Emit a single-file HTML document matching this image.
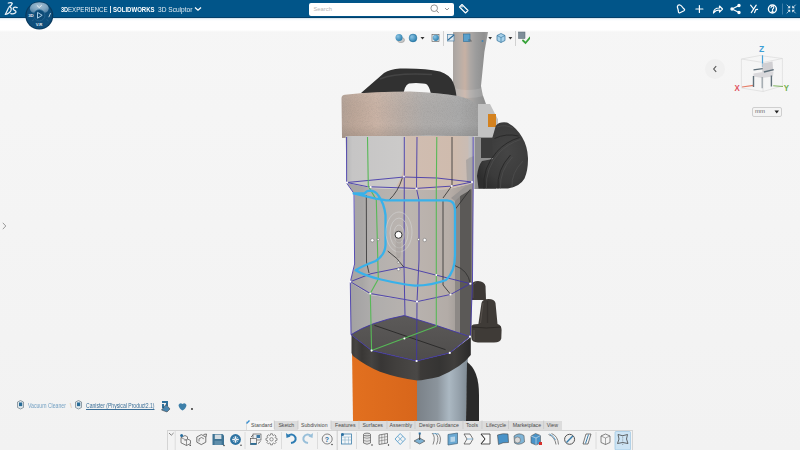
<!DOCTYPE html>
<html><head><meta charset="utf-8">
<style>
*{margin:0;padding:0;box-sizing:border-box}
html,body{width:800px;height:450px;overflow:hidden;background:#f1f1f1;font-family:"Liberation Sans",sans-serif}
#bg{position:absolute;left:0;top:0;width:800px;height:450px;background:linear-gradient(#f6f6f6,#f2f2f2)}
#hdr{position:absolute;left:0;top:0;width:800px;height:17.5px;background:#015589;border-bottom:1px solid #03406a}
#strip{position:absolute;left:0;top:17.5px;width:800px;height:14px;background:linear-gradient(#cfdde8 0px,#f4f9fc 1.5px,#fff 3px,#fff 12px,#f6f6f6 14px)}
svg{position:absolute}
.t{position:absolute;white-space:nowrap;line-height:1}
#tabs span{position:absolute;top:0;white-space:nowrap;line-height:1}
</style></head><body>
<div id="bg"></div>
<div id="hdr"></div>
<div id="strip"></div>
<!-- 3DS logo -->
<svg width="20" height="18" style="position:absolute;left:0;top:0" viewBox="0 0 20 18">
<g fill="none" stroke="#e9f1f7" stroke-width="1.25" stroke-linecap="round" stroke-linejoin="round">
<path d="M8.3 3 Q11.8 2.2 12.3 3.4 Q12 5.2 9.2 6.9 Q12 7.2 11 10.2 Q9.6 13.6 5.3 14.3"/>
<path d="M8.6 7.8 L5.6 14"/>
<path d="M17.2 7.6 Q14.5 6.6 13.2 8.2 Q12.8 9.8 15 10.6 Q16.8 11.5 15.2 13.1 Q13.6 14.2 10.8 13.7"/>
</g>
</svg>
<!-- compass -->
<svg width="34" height="34" style="position:absolute;left:22px;top:-1px" viewBox="0 0 34 34">
<defs><radialGradient id="cmpTop" cx="0.5" cy="0.35" r="0.65"><stop offset="0" stop-color="#b4cbdc"/><stop offset="0.6" stop-color="#8eb0c8"/><stop offset="1" stop-color="#5f8cae"/></radialGradient></defs>
<circle cx="17.3" cy="16.6" r="14" fill="#083a5e"/>
<circle cx="17.3" cy="16.6" r="12.8" fill="#0e4e7b"/>
<path d="M7.8 9 Q9 3.3 17.3 3.2 Q25.6 3.3 26.8 9 Q26.5 13.5 22 13.8 Q19.5 11.5 17.3 11.5 Q15 11.5 12.6 13.8 Q8 13.5 7.8 9 Z" fill="url(#cmpTop)" opacity="0.9"/>
<circle cx="17.3" cy="16.3" r="5.6" fill="#0d4a76" stroke="#2a6a96" stroke-width="0.7"/>
<path d="M15.5 13.4 L15.5 19.2 L20.2 16.3 Z" fill="none" stroke="#a8cbe4" stroke-width="1"/>
<text x="6.2" y="18.2" font-family="Liberation Sans" font-size="4.3" font-weight="bold" fill="#e3ecf3">3D</text>
<text x="13.7" y="26.8" font-family="Liberation Sans" font-size="4.3" font-weight="bold" fill="#e3ecf3">V.R</text>
<path d="M26.8 18.2 L28.6 14" stroke="#c5d6e3" stroke-width="0.9"/>
<path d="M14.8 6.3 L17.2 8.6 L19.8 6.1" stroke="#f0f5f9" stroke-width="0.9" fill="none"/>
<path d="M10 22 L12 20.5 M24.6 20.5 L26.6 22" stroke="#3b75a0" stroke-width="0.5"/>
</svg>
<div class="t" style="left:61px;top:6px;font-size:7.2px;color:#fff;font-weight:bold;transform-origin:0 0;transform:scaleX(0.78)">3D</div>
<div class="t" style="left:68px;top:6px;font-size:7.2px;color:#e4edf4;transform-origin:0 0;transform:scaleX(0.855)">EXPERIENCE</div>
<div style="position:absolute;left:110px;top:6px;width:0.8px;height:7px;background:#dfe8ef"></div>
<div class="t" style="left:113px;top:6px;font-size:7.2px;color:#fff;font-weight:bold;transform-origin:0 0;transform:scaleX(0.84)">SOLIDWORKS</div>
<div class="t" style="left:158px;top:6px;font-size:7.2px;color:#e4edf4;transform-origin:0 0;transform:scaleX(0.916)">3D Sculptor</div>
<svg width="10" height="10" style="position:absolute;left:193px;top:4px" viewBox="0 0 10 10"><path d="M2 3.5 L5 6.2 L8 3.5" fill="none" stroke="#fff" stroke-width="1.3"/></svg>
<!-- search -->
<div style="position:absolute;left:309px;top:3px;width:145px;height:12.5px;background:#fff;border-radius:2px"></div>
<div class="t" style="left:313.5px;top:6.8px;font-size:5.8px;color:#b5b5b5">Search</div>
<svg width="40" height="14" style="position:absolute;left:426px;top:2px" viewBox="0 0 40 14">
<circle cx="8.2" cy="6.2" r="3.3" fill="none" stroke="#888" stroke-width="0.9"/><path d="M10.6 8.6 L12.6 10.8" stroke="#888" stroke-width="1"/>
<path d="M19 6 L21 8 L23 6" fill="none" stroke="#888" stroke-width="0.9"/>
</svg>
<svg width="14" height="14" style="position:absolute;left:457px;top:2px" viewBox="0 0 14 14">
<path d="M3 4.5 L5 2.5 L11 8.5 L8.5 11 L2.5 5 Z" fill="none" stroke="#fff" stroke-width="1.1" stroke-linejoin="round"/><circle cx="5" cy="4.8" r="0.8" fill="#fff"/>
</svg>
<!-- right header icons -->
<svg width="130" height="17" style="position:absolute;left:670px;top:0" viewBox="0 0 130 17">
<g fill="none" stroke="#fff" stroke-width="1.2" stroke-linejoin="round" stroke-linecap="round">
<path d="M7.3 6.8 Q7.8 4.6 10 5 Q11.5 5.5 12.5 7.3 L14.6 9.5 Q14.8 10.3 14 10.8 L10 12.8 Q9 13.2 8.5 12.2 Q8.3 10 7.3 6.8 Z"/>
<path d="M29.4 5.6 L29.4 12.4 M25.9 9 L32.9 9"/>
<path d="M43.5 13 Q43.5 8 49.5 8 L49.5 6 L52.5 9 L49.5 12 L49.5 10 Q45.5 10 43.5 13"/>
<path d="M62 9 L69 5.5 M62 9 L69 12.5"/><circle cx="62" cy="9" r="1.1" fill="#fff"/><circle cx="69" cy="5.5" r="1.1" fill="#fff"/><circle cx="69" cy="12.5" r="1.1" fill="#fff"/>
<path d="M80.6 5.2 L83.6 9 M86.2 5.2 L81.3 12.6 M84.6 12.6 L85.9 9.6 L87.6 9.4"/>
<circle cx="102.4" cy="9" r="4" stroke-width="1.4"/><path d="M101 7.7 Q101.2 6.2 102.5 6.3 Q103.9 6.5 103.7 7.8 Q103.5 8.7 102.5 9.2 L102.5 10.3" stroke-width="1.1"/><circle cx="102.5" cy="11.7" r="0.5" fill="#fff"/>

</g>
<path d="M112.5 3.5 L112.5 14.5" stroke="#4d88b0" stroke-width="0.8"/>
<g fill="#e6eff6"><path d="M120.2 8.2 L117.4 8.2 L120.2 5.4 Z"/><path d="M122.2 8.2 L125 8.2 L122.2 5.4 Z"/><path d="M120.2 9.8 L117.4 9.8 L120.2 12.6 Z"/><path d="M122.2 9.8 L125 9.8 L122.2 12.6 Z"/></g>
<path d="M116.7 4.7 L119 7 M125.7 4.7 L123.4 7 M116.7 13.3 L119 11 M125.7 13.3 L123.4 11" stroke="#cfe0ec" stroke-width="0.8"/>
</svg>
<!-- collapse arrow -->
<div style="position:absolute;left:705px;top:59px;width:20px;height:20px;border-radius:50%;background:#f0f0f0"></div>
<svg width="10" height="10" style="position:absolute;left:710px;top:64px" viewBox="0 0 10 10"><path d="M6.2 2.2 L3.7 5 L6.2 7.8" fill="none" stroke="#555" stroke-width="1.1"/></svg>
<!-- view cube -->
<svg width="64" height="60" style="position:absolute;left:732px;top:40px" viewBox="732 40 64 60">
<g fill="none" stroke="#d6d6d6" stroke-width="0.6">
<path d="M741.4 59 L760 55.5 L782.4 58.5 L782.4 86 L763 91.5 L741.4 88 Z"/>
<path d="M741.4 59 L763 62.5 L782.4 58.5 M763 62.5 L763 91.5"/>
</g>
<path d="M762.5 55.3 L762.5 67" stroke="#4aa3d8" stroke-width="1.2"/>
<path d="M742 87 L753.5 85.4" stroke="#e57f68" stroke-width="1.1"/>
<path d="M773.2 85.7 L783 86.5" stroke="#7db35e" stroke-width="1.1"/>
<path d="M762.2 63.5 L772.5 61.5 L773.2 71 L762.5 73 Z" fill="#d0cfd2"/>
<path d="M753.5 73.5 L763 72 L773.5 71.5 L773 76.5 L762 78 L753.5 76.5 Z" fill="#d9d8db"/>
<path d="M753.5 69.8 L762.7 68.6" stroke="#5c6d78" stroke-width="1.3"/>
<path d="M763.9 72 L773.7 69.7" stroke="#5c6d78" stroke-width="1.3"/>
<path d="M753.5 76 L753.5 87" stroke="#5f6f79" stroke-width="1.4"/>
<path d="M762.2 77 L762.2 88.3" stroke="#a0a7ad" stroke-width="1.4"/>
<path d="M771.4 75.5 L771.4 86.5" stroke="#5f6f79" stroke-width="1.4"/>
<text x="759" y="51.8" font-family="Liberation Sans" font-size="9.3" font-weight="bold" fill="#3d9fd6" transform="translate(759 51.8) scale(0.92 1) translate(-759 -51.8)">Z</text>
<text x="734.6" y="91" font-family="Liberation Sans" font-size="9.3" font-weight="bold" fill="#df4f5c" transform="translate(734.6 91) scale(0.85 1) translate(-734.6 -91)">X</text>
<text x="783.8" y="90.8" font-family="Liberation Sans" font-size="9.3" font-weight="bold" fill="#6fae4c" transform="translate(783.8 90.8) scale(0.85 1) translate(-783.8 -90.8)">Y</text>
</svg>
<!-- mm dropdown -->
<div style="position:absolute;left:752px;top:107px;width:30px;height:9.5px;background:#f4f4f4;border:0.8px solid #cfcfcf;border-radius:2px"></div>
<div class="t" style="left:755px;top:108px;font-size:6px;color:#666">mm</div>
<svg width="8" height="8" style="position:absolute;left:773px;top:108px" viewBox="0 0 8 8"><path d="M1.5 2.5 L6 2.5 L3.75 5.5 Z" fill="#222"/></svg>
<!-- left edge marker -->
<svg width="10" height="10" style="position:absolute;left:0;top:221px" viewBox="0 0 10 10"><path d="M2.8 1.8 L5.8 5 L2.8 8.2" fill="none" stroke="#9a9a9a" stroke-width="1"/></svg>

<svg width="800" height="450" viewBox="0 0 800 450" style="position:absolute;left:0;top:0">
<defs>
<linearGradient id="ring" x1="342" x2="478" gradientUnits="userSpaceOnUse"><stop offset="0" stop-color="#b5a397"/><stop offset="0.08" stop-color="#bda799"/><stop offset="0.25" stop-color="#cbb4a6"/><stop offset="0.42" stop-color="#bcafa7"/><stop offset="0.6" stop-color="#b0adab"/><stop offset="0.85" stop-color="#ababab"/><stop offset="1" stop-color="#9f9f9f"/></linearGradient>
<linearGradient id="ringv" x1="0" y1="0" x2="0" y2="1"><stop offset="0" stop-color="#fff" stop-opacity="0.06"/><stop offset="0.7" stop-color="#000" stop-opacity="0"/><stop offset="1" stop-color="#000" stop-opacity="0.1"/></linearGradient>
<linearGradient id="bodyU" x1="346" x2="474" gradientUnits="userSpaceOnUse"><stop offset="0" stop-color="#b8b8ba"/><stop offset="0.05" stop-color="#c6c5c5"/><stop offset="0.42" stop-color="#cbcac9"/><stop offset="0.455" stop-color="#cbc6c3"/><stop offset="0.475" stop-color="#d0bdb1"/><stop offset="0.85" stop-color="#cfbbad"/><stop offset="0.95" stop-color="#c9bcb4"/><stop offset="0.97" stop-color="#c0bfc1"/><stop offset="1" stop-color="#b2b2b6"/></linearGradient>
<linearGradient id="bodyM" x1="347" x2="474" gradientUnits="userSpaceOnUse"><stop offset="0" stop-color="#a7a5a4"/><stop offset="0.12" stop-color="#a8a6a5"/><stop offset="0.18" stop-color="#b3b0ae"/><stop offset="0.5" stop-color="#bcb5b0"/><stop offset="0.8" stop-color="#b7aea8"/><stop offset="1" stop-color="#9d9590"/></linearGradient>
<linearGradient id="bodyL" x1="350" x2="472" gradientUnits="userSpaceOnUse"><stop offset="0" stop-color="#a2a1a2"/><stop offset="0.2" stop-color="#afadac"/><stop offset="0.5" stop-color="#b8b3af"/><stop offset="0.8" stop-color="#b3aca7"/><stop offset="1" stop-color="#8d8986"/></linearGradient>
<linearGradient id="pipe" x1="453" x2="498" gradientUnits="userSpaceOnUse"><stop offset="0" stop-color="#a9a4a1"/><stop offset="0.133" stop-color="#b6ada7"/><stop offset="0.267" stop-color="#c7b1a4"/><stop offset="0.378" stop-color="#ada8a5"/><stop offset="0.511" stop-color="#9c9c9c"/><stop offset="0.689" stop-color="#8f8f8f"/><stop offset="0.822" stop-color="#a3a3a3"/><stop offset="1" stop-color="#b5b5b5"/></linearGradient>
<linearGradient id="metal" x1="0" x2="1"><stop offset="0" stop-color="#7a8188"/><stop offset="0.4" stop-color="#8b949c"/><stop offset="0.63" stop-color="#abb8c2"/><stop offset="0.82" stop-color="#96a2ac"/><stop offset="1" stop-color="#7d8891"/></linearGradient>
<linearGradient id="orange" x1="0" x2="1"><stop offset="0" stop-color="#e2701f"/><stop offset="1" stop-color="#d8661b"/></linearGradient>
<linearGradient id="band" x1="351" x2="471" gradientUnits="userSpaceOnUse"><stop offset="0" stop-color="#3a3836"/><stop offset="0.04" stop-color="#474543"/><stop offset="0.09" stop-color="#393735"/><stop offset="0.17" stop-color="#454341"/><stop offset="0.25" stop-color="#383635"/><stop offset="0.37" stop-color="#413f3d"/><stop offset="0.55" stop-color="#4a4846"/><stop offset="0.58" stop-color="#3c3a38"/><stop offset="0.74" stop-color="#353433"/><stop offset="0.86" stop-color="#403e3c"/><stop offset="0.94" stop-color="#333231"/><stop offset="1" stop-color="#2a2929"/></linearGradient>
<linearGradient id="floor" x1="0" y1="0" x2="0" y2="1"><stop offset="0" stop-color="#5c5a59"/><stop offset="1" stop-color="#4e4c4b"/></linearGradient>
<radialGradient id="motor" cx="0.6" cy="0.45" r="0.65"><stop offset="0" stop-color="#454545"/><stop offset="0.7" stop-color="#3b3b3b"/><stop offset="1" stop-color="#2e2e2e"/></radialGradient>
<filter id="grain" x="0" y="0" width="1" height="1"><feTurbulence type="fractalNoise" baseFrequency="1.2" numOctaves="2" seed="3" result="n"/><feColorMatrix in="n" type="matrix" values="0 0 0 0 0  0 0 0 0 0  0 0 0 0 0  0 0 0 -1.6 1" result="a"/><feComposite in="SourceGraphic" in2="a" operator="in" result="c"/><feComposite in="c" in2="SourceGraphic" operator="in"/></filter>
</defs>
<!-- pipe -->
<path d="M453 32 L488 32 L484.4 52 L481 86 Q482 95 486 104 Q491 112 498 119.5 L497 140 L478 140 L478 110 L453 110 Z" fill="url(#pipe)"/>
<path d="M454 88 Q468 92 482 88 L484 96 Q468 100 454 96 Z" fill="#ffffff" opacity="0.12"/>
<path d="M478 104 L490 104 Q494 112 498 119.5 L497 140 L478 140 Z" fill="#c2c2c2"/>
<rect x="488" y="114" width="8" height="13" fill="#d4821f"/>
<rect x="474" y="137" width="22" height="52" fill="#8f8f8f"/>
<rect x="481" y="138" width="13" height="20" fill="#3c3c3c"/>
<!-- motor housing -->
<path d="M477 176 L478.5 188.5 L508 188.5 Q520 186.5 524.5 178.5 Q528.2 170 528 158 Q527.5 146 522 137 Q516 127 507 122.5 Q499 121.5 495.8 125.7 L492 139 L493 159 L482 161 Q478 166 477 176 Z" fill="url(#motor)"/>
<g fill="none" stroke="#272727" stroke-width="0.9">
<path d="M494.5 138.5 Q506 133 518.5 136"/>
<path d="M484 188.5 Q482 168 497 151.5 Q506 141.5 519.5 137.5"/>
<path d="M498 188.5 Q496.5 170 510.5 155"/>
</g>
<g fill="none" stroke="#555" stroke-width="0.7" opacity="0.8">
<path d="M486.5 188.5 Q485 169 499 153 Q508 143.5 520.5 139.5"/>
<path d="M500.5 188.5 Q499.5 171 512.5 157"/>
<path d="M512 187.5 Q511 173 523 161"/>
<path d="M497 127 Q505 124 513 128"/>
</g>
<!-- handle -->
<path d="M361 93 L384 73 Q390 69 400 68.5 Q425 68 440 71.5 Q450 75 453 82 Q456 89 456.7 99 L431.5 99 Q431 89 427 84.5 Q424 83 416 83 L409 83.5 Q404 85 402.5 99 Z" fill="#313131"/>
<path d="M380 79 Q395 72.5 432 74.5" fill="none" stroke="#444" stroke-width="1.5"/>
<!-- ring -->
<path d="M341.5 98 Q341.6 95 345 94.8 Q375 91.5 410 91.5 Q440 92.5 458 96 Q470 98.5 475 103 Q478 106 478 111 L478 136.5 Q410 134.5 342 138 Z" fill="url(#ring)"/>
<path d="M341.5 98 Q341.6 95 345 94.8 Q375 91.5 410 91.5 Q440 92.5 458 96 Q470 98.5 475 103 Q478 106 478 111 L478 136.5 Q410 134.5 342 138 Z" fill="url(#ringv)"/>
<path d="M341.5 98 Q341.6 95 345 94.8 Q375 91.5 410 91.5 Q440 92.5 458 96 Q470 98.5 475 103 Q478 106 478 111 L478 136.5 Q410 134.5 342 138 Z" fill="#6e6a68" opacity="0.16" filter="url(#grain)"/>
<!-- body upper -->
<path d="M345.5 136 L473.5 136 L473.5 183 L449 189 L417 190 L371 188 L347 183 Z" fill="url(#bodyU)"/>
<path d="M405.5 150 Q405 175 396 186.5 L410 188.5 L410 150 Z" fill="#d0bdb1"/>
<path d="M466 160 Q470 157 474 156 L474 182 L467 183 Z" fill="#9a9897" opacity="0.6"/>
<!-- body middle -->
<path d="M347 183 L371 188 L417 190 L449 189 L473.5 183 L472.5 283 L450 295 L417 301 L370 295 L350.3 282 L355 264 L354.6 194 Z" fill="url(#bodyM)"/>
<!-- body lower -->
<path d="M350.3 282 L370 295 L417 301 L450 295 L472 283 L470.5 337 L351 335 Z" fill="url(#bodyL)"/>
<!-- dark right side -->
<path d="M455 200 L460 195 L460 333 L455 331 Z" fill="#8d8986"/>
<path d="M460 195 L471.5 188 L471.5 337 L460 333 Z" fill="#5b5957"/>
<path d="M451 198 L464 187.5 L472 183.5 L472 189 L461 195.5 L455 201 Z" fill="#9a9694"/>
<path d="M455.7 208.7 L470.3 189.3" stroke="#2e2e2e" stroke-width="0.8"/>
<path d="M455 265.7 Q468 270 470.3 283.7" stroke="#2e2e2e" stroke-width="0.8" fill="none"/>
<path d="M474 137 L474 183 L473.3 283" stroke="#ffffff" stroke-width="1" opacity="0.7" fill="none"/>
<!-- knobs -->
<path d="M471.5 300 L471.5 285 Q472.5 281 478 281 Q484.5 281.3 485.5 286 L486 300 Z" fill="#3d3936"/>
<path d="M473 298 L473 285 Q474 283 476 282.5" stroke="#5c5752" stroke-width="0.8" fill="none"/>
<path d="M478.4 324 L481.5 303 Q482.5 299 488.5 299 Q494.5 299 495.5 303 L497.5 324 Q501.5 325 501.6 330 L501.3 338.5 Q500.5 342.5 494 342.6 L478 342.6 Q471.5 342 471.4 338 L471.4 326 Q472 324 478.4 324 Z" fill="#3f3b37"/>
<path d="M472 327 Q486 329 501 327" stroke="#2b2825" stroke-width="0.9" fill="none"/>
<path d="M483 303 L480.5 323 M474 330 L474 340" stroke="#5e5853" stroke-width="0.8" fill="none"/>
<path d="M487.5 301 L487.5 323" stroke="#35312e" stroke-width="1.2"/>
<!-- lower metal -->
<path d="M417 366 L468 352 L466 421 L417 421 Z" fill="url(#metal)"/>
<path d="M467 362 Q479 370 479 395 L479 421 L466 421 Z" fill="#2a2a2a"/>
<!-- orange -->
<path d="M352 350 L417 368 L417 421 L353 421 Z" fill="url(#orange)"/>
<!-- dark band -->
<path d="M351.5 335 L371.6 350.6 L416.6 361 L449.8 352.9 L470.8 337 L470.8 355 Q462 367 439 376.7 Q425 380 417 380.5 Q398 378 380 371.7 Q366 366 353 356 L351.5 353 Z" fill="url(#band)"/>
<!-- floor -->
<path d="M351 334.7 Q370 322 404.4 315.5 L435 325 L470 336.6 L449.8 352.9 L416.6 361 L371.6 350.6 Z" fill="url(#floor)"/>
<path d="M374.4 325.3 L445.6 349.7" stroke="#222" stroke-width="0.8"/>
<!-- blue mesh lines -->
<g fill="none" stroke="#3f34aa" stroke-width="0.95" opacity="0.9">
<path d="M346.6 137 L346.6 183 L354 193.5 L354.6 264 L350.3 282 L351 334.7"/>
<path d="M473.2 137 L473.2 183 L472.5 283 L470.3 336.6"/>
<path d="M417 137 L416.5 188.7 L419 200 L419 260 L417 301.6 L416.6 361"/>
<path d="M404.3 137 L404.3 178 L404 267 L405 315.5"/>
<path d="M347 182.5 L404 177 L437 178 L472 182"/>
<path d="M347 182.5 L367.5 186.7 L416 188.4 L452 186.1 L472 182"/>
<path d="M350.3 281.7 L371 273.7 L404 267 L435.7 275 L470.3 283.7"/>
<path d="M350.3 281.7 L370.3 293.5 L417 301.6 L450.5 294.5 L470.3 283.7"/>
<path d="M351 334.7 L371.6 350.6 L416.6 361 L449.8 352.9 L470 336.6"/>
<path d="M351 334.7 Q370 322 404.4 315.5 L435 325 L470 336.6"/>
</g>
<!-- green lines -->
<g fill="none" stroke="#57b957" stroke-width="1.1">
<path d="M367.5 137 L368.3 186 L376.3 200 L378.3 279 L370.3 293.5 L371.6 350.6"/>
<path d="M436.8 137 L436.3 190 L436.3 275 L436.3 326.3"/>
<path d="M371.6 350.6 L436.3 326.3"/>
</g>
<!-- thin dark lines -->
<g fill="none" stroke="#2f2f2f" stroke-width="0.8">
<path d="M452 137 L452 186"/>
<path d="M366.3 195 L366.5 262 L369 273"/>
<path d="M402.3 178 Q398 192 389 200"/>
<path d="M443 198 L451.7 186"/>
<path d="M443 200 L443 285 L450.3 294"/>
<path d="M387.7 251 Q398 258 403.7 267"/>
</g>
<!-- cyan curve -->
<g fill="none" stroke="#38b1ea" stroke-width="2.3" stroke-linejoin="round" stroke-linecap="round">
<path d="M353.7 193.5 L364.5 193.5 Q366.5 190.6 370.5 190.6 Q375.5 191 378.3 195.5 Q384 203 385.5 215 L385.5 245 Q385 255 375.7 261 Q362 266 355.7 270.3 Q365 276 381 279.5 Q400 284 415 285.7 Q432 285.5 446 280 Q455 272 455 255 L455 210 Q455 200.3 447 200.3 L386 200.3 Q378 199 375.7 198.7 L353.7 193.5"/>
</g>
<!-- manipulator -->
<g fill="none" stroke="#d3d3d3" stroke-width="0.6">
<ellipse cx="399" cy="232" rx="13" ry="20"/>
<ellipse cx="399" cy="233" rx="9" ry="15"/>
<ellipse cx="399" cy="234" rx="5" ry="9"/>
</g>
<path d="M396 240 Q395 250 397 258 L400 258 Q402 250 401 240 Z" fill="#9a9592" opacity="0.35"/>
<ellipse cx="398.5" cy="236" rx="7" ry="6" fill="#a8a4a1" opacity="0.25"/>
<circle cx="398.5" cy="234.8" r="3.5" fill="#fff" stroke="#333" stroke-width="1"/>
<g fill="#fff" stroke="#666" stroke-width="0.5">
<circle cx="372.3" cy="240.3" r="1.7"/><circle cx="378.3" cy="239.6" r="1.1"/><circle cx="418.5" cy="239.5" r="1.1"/><circle cx="424.7" cy="240" r="1.7"/>
<circle cx="398.5" cy="269.3" r="1.4"/><circle cx="398.3" cy="262.3" r="1.1"/>
</g>
<g fill="#fff">
<circle cx="347" cy="182.5" r="1.1"/><circle cx="370.6" cy="187" r="1.1"/><circle cx="416.5" cy="188.7" r="1.1"/><circle cx="451.7" cy="186" r="1.1"/><circle cx="472" cy="182" r="1.1"/>
<circle cx="350.3" cy="281.7" r="1.1"/><circle cx="370.3" cy="293.5" r="1.1"/><circle cx="417" cy="301.6" r="1.1"/><circle cx="450.5" cy="294.5" r="1.1"/><circle cx="470.3" cy="283.7" r="1.1"/>
<circle cx="371.6" cy="350.6" r="1.1"/><circle cx="416.6" cy="361" r="1.1"/><circle cx="449.8" cy="352.9" r="1.1"/><circle cx="470" cy="336.6" r="1.1"/><circle cx="404.4" cy="338.4" r="1"/><circle cx="404" cy="176.5" r="0.9"/><circle cx="436.3" cy="275" r="0.9"/>
</g>
</svg>

<!-- viewport toolbar -->
<svg width="140" height="20" style="position:absolute;left:390px;top:28px" viewBox="390 28 140 20">
<defs><radialGradient id="sph" cx="0.35" cy="0.35" r="0.7"><stop offset="0" stop-color="#8cc4e4"/><stop offset="1" stop-color="#2b7fae"/></radialGradient></defs>
<ellipse cx="401" cy="40" rx="3.5" ry="2.6" fill="#c9c9c9" stroke="#888" stroke-width="0.5"/>
<circle cx="399" cy="37.5" r="3.5" fill="url(#sph)"/>
<circle cx="413" cy="38" r="3.9" fill="url(#sph)" stroke="#1f6a96" stroke-width="0.5"/>
<path d="M420.5 37 L424.5 37 L422.5 39.5 Z" fill="#333"/>
<rect x="432" y="34.5" width="7" height="7" fill="none" stroke="#555" stroke-width="0.6"/>
<circle cx="435.8" cy="37.8" r="3.1" fill="url(#sph)"/>
<path d="M443.5 31 L443.5 46" stroke="#c8c8c8" stroke-width="0.8"/>
<rect x="447.5" y="34.5" width="6.5" height="6.5" fill="#dfe9f0" stroke="#4a7ea3" stroke-width="0.7"/>
<path d="M448 40 L454 35" stroke="#2c6c99" stroke-width="1.1"/>
<rect x="463.5" y="34" width="6.5" height="7.5" fill="#5aa0cc" stroke="#2a6d98" stroke-width="0.6"/>
<path d="M468 40 L471 40 L471 42" stroke="#555" stroke-width="0.6" fill="none"/>
<circle cx="482.5" cy="41" r="1" fill="#3f86b7"/>
<path d="M488.3 37 L492 37 L490.2 39.5 Z" fill="#333"/>
<path d="M497 35.5 L501 33.5 L505 35.5 L505 40.5 L501 42.5 L497 40.5 Z" fill="#a9d2ea" stroke="#2e6f99" stroke-width="0.7"/>
<path d="M501 37.5 L501 42.5 M497 35.5 L501 37.5 L505 35.5" stroke="#2e6f99" stroke-width="0.6" fill="none"/>
<path d="M508.5 37 L512.3 37 L510.4 39.5 Z" fill="#333"/>
<path d="M515.5 31 L515.5 46" stroke="#c8c8c8" stroke-width="0.8"/>
<rect x="518.5" y="32" width="6.5" height="6.5" fill="#7e8e99" stroke="#56656f" stroke-width="0.5"/>
<path d="M523 40.5 L525.5 43 L530 37.5" fill="none" stroke="#38a33a" stroke-width="1.8" stroke-linecap="round"/>
</svg>

<!-- breadcrumb -->
<svg width="200" height="20" style="position:absolute;left:10px;top:396px" viewBox="10 396 200 20">
<g>
<path d="M17.5 402 L20.5 400.5 L23.5 402 L23.5 407.5 L20.5 409 L17.5 407.5 Z" fill="#dfe6ea" stroke="#6d7c86" stroke-width="0.7"/>
<rect x="19" y="402.5" width="3.2" height="3.6" fill="#2a6c97"/>
<path d="M75.5 402 L78.5 400.5 L81.5 402 L81.5 407.5 L78.5 409 L75.5 407.5 Z" fill="#dfe6ea" stroke="#6d7c86" stroke-width="0.7"/>
<rect x="77" y="402.5" width="3.2" height="3.6" fill="#2a6c97"/>
</g>
<path d="M162 402 L167 402 L167 406 M163 404 L163 408" stroke="#2d6f9b" stroke-width="2" fill="none"/>
<path d="M161.5 410 L166 404.5 L170 409 L167 412 Z" fill="#4986b0" stroke="#333" stroke-width="0.5"/>
<path d="M178.5 405 Q180 402 182.5 404 Q185 402 186.5 405 Q186 408.5 182.5 410.5 Q179 408.5 178.5 405 Z" fill="#3d7fa9"/>
<circle cx="192" cy="409" r="0.9" fill="#222"/>
</svg>
<div class="t" style="left:28px;top:403px;font-size:6.5px;color:#74a1c3;transform-origin:0 0;transform:scaleX(0.79)">Vacuum Cleaner</div>
<div class="t" style="left:70px;top:403px;font-size:6.6px;color:#d9b592">\</div>
<div class="t" style="left:86px;top:403px;font-size:6.5px;color:#3a6e97;text-decoration:underline;transform-origin:0 0;transform:scaleX(0.78)">Canister (Physical Product2.1)</div>
<!-- tabs -->
<div style="position:absolute;left:246px;top:420.5px;width:316px;height:9px;background:#dcdcdc"></div>
<div style="position:absolute;left:247px;top:421px;width:27px;height:8.5px;background:#f6f6f6"></div>
<div style="position:absolute;left:298px;top:421px;width:33px;height:8.5px;background:#efefef"></div>
<svg width="6" height="6" style="position:absolute;left:246px;top:420px" viewBox="0 0 6 6"><path d="M0.5 3.5 L3.5 0.5" stroke="#3a8fd0" stroke-width="1.4"/></svg>
<div id="tabs" style="position:absolute;left:246px;top:422.5px;height:8px;font-size:5.2px;color:#4a4a4a">
<span style="left:5px">Standard</span><span style="left:32.4px">Sketch</span><span style="left:55px">Subdivision</span><span style="left:89px">Features</span><span style="left:116.4px">Surfaces</span><span style="left:143.6px">Assembly</span><span style="left:173px">Design Guidance</span><span style="left:220px">Tools</span><span style="left:240px">Lifecycle</span><span style="left:266.8px">Marketplace</span><span style="left:300.8px">View</span>
</div>
<svg width="320" height="10" style="position:absolute;left:246px;top:420px" viewBox="246 420 320 10">
<g stroke="#c4c4c4" stroke-width="0.7">
<path d="M274.3 420.5 L274.3 429 M298 420.5 L298 429 M331 420.5 L331 429 M359 420.5 L359 429 M387 420.5 L387 429 M415 420.5 L415 429 M463 420.5 L463 429 M482 420.5 L482 429 M508.5 420.5 L508.5 429 M543.6 420.5 L543.6 429"/>
</g>
</svg>
<!-- toolbar -->
<div style="position:absolute;left:167px;top:429.5px;width:466px;height:21px;background:#f3f3f3;border:0.8px solid #d4d4d4;border-bottom:none"></div>
<svg width="470" height="22" style="position:absolute;left:165px;top:428px" viewBox="165 428 470 22">
<defs>
<linearGradient id="bl" x1="0" y1="0" x2="0" y2="1"><stop offset="0" stop-color="#6fb3dc"/><stop offset="1" stop-color="#2f79a8"/></linearGradient>
</defs>
<path d="M169 433 L171.3 435.2 L173.6 433" fill="none" stroke="#666" stroke-width="0.8"/>
<g stroke="#d6d6d6" stroke-width="0.8">
<path d="M175.2 430 L175.2 450 M245 432 L245 449 M281.5 432 L281.5 449 M317.5 432 L317.5 449 M356.5 432 L356.5 449 M410 432 L410 449 M596 432 L596 449"/>
</g><g stroke="#c6c6c6" stroke-width="0.9"><path d="M337.2 430 L337.2 450"/>
</g>
<!-- icon1 -->
<path d="M181 437.5 L185 435.5 L187.5 436.8 L187.5 439 L190.5 440.5 L190.5 443.5 L186.5 445.5 L181 442.8 Z" fill="#f2f2f2" stroke="#555" stroke-width="0.75" stroke-linejoin="round"/>
<path d="M181 437.5 L186.5 440.3 L186.5 445.5 M186.5 440.3 L187.5 439.8 M187.5 439 L184.5 440.6" fill="none" stroke="#555" stroke-width="0.6"/>
<circle cx="181.6" cy="435.6" r="1.5" fill="#2a6f9f"/>
<circle cx="190.2" cy="445.3" r="0.7" fill="#222"/>
<!-- icon2 -->
<path d="M196.8 437 L201.3 434.6 L205.8 437 L205.8 442.2 L201.3 444.6 L196.8 442.2 Z" fill="#f0f0f0" stroke="#555" stroke-width="0.8"/>
<path d="M199 441.5 L199 438.8 L201.5 437.5 L203.8 438.8" fill="none" stroke="#555" stroke-width="0.7"/>
<path d="M203.5 434.5 L206.5 434 L206 437" fill="none" stroke="#555" stroke-width="0.8"/>
<!-- floppy -->
<path d="M212.5 434 L222.5 434 L224 435.5 L224 445 L212.5 445 Z" fill="#3e7394"/>
<rect x="214.8" y="434.6" width="6.6" height="4.4" fill="#d3dce2"/>
<rect x="214.5" y="440.8" width="7.2" height="4.2" fill="#5f8eab"/>
<circle cx="224" cy="445.5" r="0.7" fill="#222"/>
<!-- blue refresh circle -->
<circle cx="235.5" cy="439.5" r="5.4" fill="#2e73a2"/>
<path d="M235.5 436.2 L235.5 442.8 M232.2 439.5 L238.8 439.5" stroke="#f3f3f3" stroke-width="1.6"/>
<path d="M233 437 L238 442 M238 437 L233 442" stroke="#9cc3dc" stroke-width="0.9"/>
<circle cx="241" cy="445.2" r="0.7" fill="#222"/>
<!-- icon5 -->
<rect x="253" y="434" width="8" height="6" fill="#e8edf0" stroke="#444" stroke-width="0.6"/>
<rect x="256.5" y="435" width="3.5" height="3" fill="#3c78a3"/>
<rect x="250.5" y="438.5" width="6" height="6" fill="#f0f0f0" stroke="#444" stroke-width="0.6"/>
<rect x="250.5" y="443" width="6" height="1.8" fill="#2d6e96"/>
<path d="M251 437 L253 435.2 M258 443.5 L260.5 441.5" stroke="#333" stroke-width="0.7"/>
<!-- gear -->
<path d="M277.02 438.35 L277.02 440.25 L275.51 440.54 L275.21 441.26 L276.07 442.53 L274.73 443.87 L273.46 443.01 L272.74 443.31 L272.45 444.82 L270.55 444.82 L270.26 443.31 L269.54 443.01 L268.27 443.87 L266.93 442.53 L267.79 441.26 L267.49 440.54 L265.98 440.25 L265.98 438.35 L267.49 438.06 L267.79 437.34 L266.93 436.07 L268.27 434.73 L269.54 435.59 L270.26 435.29 L270.55 433.78 L272.45 433.78 L272.74 435.29 L273.46 435.59 L274.73 434.73 L276.07 436.07 L275.21 437.34 L275.51 438.06 Z" fill="#f6f6f6" stroke="#6a6a6a" stroke-width="0.75" stroke-linejoin="round"/>
<circle cx="271.5" cy="439.3" r="1.7" fill="none" stroke="#6a6a6a" stroke-width="0.7"/>
<!-- undo redo -->
<path d="M287.5 436 Q293 432.5 295.5 437.5 Q296.5 442 291 443" fill="none" stroke="#2d7cb3" stroke-width="2"/>
<path d="M286 433 L286.5 438 L290.5 436.5 Z" fill="#2d7cb3"/>
<path d="M311.5 436 Q306 432.5 303.5 437.5 Q302.5 442 308 443" fill="none" stroke="#98bfd9" stroke-width="2"/>
<path d="M313 433 L312.5 438 L308.5 436.5 Z" fill="#98bfd9"/>
<!-- help -->
<circle cx="327.2" cy="439" r="5" fill="none" stroke="#666" stroke-width="0.8"/>
<text x="324.8" y="441.6" font-family="Liberation Sans" font-size="7" font-weight="bold" fill="#2a6da0">?</text>
<circle cx="332" cy="444.5" r="0.7" fill="#222"/>
<!-- table -->
<rect x="341.5" y="434" width="10" height="10" fill="#f4f7f9" stroke="#3c7eaa" stroke-width="0.8"/>
<path d="M341.5 437 L351.5 437 M341.5 440 L351.5 440 M345 437 L345 444 M348.5 437 L348.5 444" stroke="#7aa5c3" stroke-width="0.5"/>
<circle cx="342.5" cy="434.5" r="1.5" fill="#2a6fa0"/>
<!-- cylinder -->
<path d="M363.5 434.5 L363.5 443 Q367 445.5 370.5 443 L370.5 434.5" fill="#e3e3e3" stroke="#555" stroke-width="0.7"/>
<ellipse cx="367" cy="434.5" rx="3.5" ry="1.4" fill="#e3e3e3" stroke="#555" stroke-width="0.7"/>
<path d="M363.5 437.5 Q367 439 370.5 437.5 M363.5 440.5 Q367 442 370.5 440.5" fill="none" stroke="#555" stroke-width="0.5"/>
<circle cx="372" cy="445" r="0.7" fill="#222"/>
<!-- grid -->
<path d="M379 435 L387.5 433.5 L387.5 443 L379 444.5 Z" fill="#eee" stroke="#555" stroke-width="0.7"/>
<path d="M381.8 434.5 L381.8 444 M384.7 434 L384.7 443.5 M379 438 L387.5 436.5 M379 441 L387.5 439.5" stroke="#666" stroke-width="0.5"/>
<circle cx="388.5" cy="445" r="0.7" fill="#222"/>
<!-- diamond -->
<path d="M400.2 433.5 L405.5 439 L400.2 444.5 L395 439 Z" fill="none" stroke="#5a9fcc" stroke-width="0.9"/>
<path d="M397.6 436.2 L402.9 441.7 M402.9 436.2 L397.6 441.7" stroke="#5a9fcc" stroke-width="0.7"/>
<!-- icons row 3 -->
<path d="M414 441 L419.7 438 L425 441 L419.7 444 Z" fill="#7fb4d6" stroke="#444" stroke-width="0.6"/>
<path d="M419.7 433 L419.7 440" stroke="#333" stroke-width="0.9"/>
<rect x="418.7" y="432.5" width="2" height="2" fill="#2a6da0"/>
<path d="M432 433 Q436 436.5 433 444.5 M435 433 Q440 436.5 436.5 444.5 M438 433.5 Q442 437 439.5 444" fill="none" stroke="#555" stroke-width="0.7"/>
<path d="M433 433.5 L438.5 434" stroke="#5a9fcc" stroke-width="0.8"/>
<path d="M448 434.5 L457.5 433 L457.5 443.5 L448 445 Z" fill="#6aa8d2" stroke="#40627a" stroke-width="0.7"/>
<path d="M450.5 437 L455 436.5 L455 441.5 L450.5 442 Z" fill="#b7d5e9"/>
<path d="M464 434 L470 434 L473 439 L470 444 L464 444 L467 439 Z" fill="#f4f4f4" stroke="#444" stroke-width="0.7"/>
<path d="M467 439 L473 439" stroke="#6aa8d2" stroke-width="0.8"/>
<path d="M481 434 L490 434 L490 444 L481 444 L485 439 Z" fill="#fafafa" stroke="#333" stroke-width="0.8"/>
<path d="M481 434 L485 439 L481 444" fill="none" stroke="#333" stroke-width="0.8"/>
<path d="M497.5 435 Q503 433 508 434 L508.5 442.5 Q503 442 498.5 444.5 Z" fill="#4a93c8" stroke="#444" stroke-width="0.6"/>
<!-- row 4 -->
<path d="M514 436 Q519 432 524 435.5 L524.5 442 Q519 446 514.5 443 Z" fill="#7fb4d6" stroke="#555" stroke-width="0.6"/>
<circle cx="517.5" cy="440" r="3" fill="#d9d9d9" stroke="#555" stroke-width="0.5"/>
<path d="M531 436 L535.5 433.5 L540.5 435.5 L540.5 443 L536 445 L531 443 Z" fill="#4a93c8" stroke="#555" stroke-width="0.6"/>
<path d="M531 436 L536 438 L540.5 435.5 M536 438 L536 445" fill="none" stroke="#dfe9f0" stroke-width="0.6"/>
<rect x="539" y="442" width="3" height="3" fill="#d6312b"/>
<path d="M548.5 434.5 Q555 437 556 444.5 M551.5 433.5 Q558 436 558.5 444.5" fill="none" stroke="#666" stroke-width="0.8"/>
<path d="M549.5 434 Q554 436 555.5 440" fill="none" stroke="#6aa8d2" stroke-width="1"/>
<circle cx="569.6" cy="439.3" r="5" fill="#eee" stroke="#555" stroke-width="1"/>
<path d="M566.5 442.5 L572.8 436" stroke="#3a7eab" stroke-width="1.4"/>
<path d="M583 444 L586 434 L591 434 L588 444 Z" fill="#f6f6f6" stroke="#444" stroke-width="0.7"/>
<path d="M585.5 443.5 L588.5 434.5" stroke="#3a7eab" stroke-width="1"/>
<path d="M601 436 L605.5 434 L610 436 L610 442.5 L605.5 444.5 L601 442.5 Z" fill="#f3f3f3" stroke="#555" stroke-width="0.7"/>
<path d="M601 436 L605.5 438 L610 436 M605.5 438 L605.5 444.5" fill="none" stroke="#555" stroke-width="0.5"/>
<rect x="615" y="431.5" width="15.5" height="18.5" rx="1" fill="#cde4f4" stroke="#8fbfe0" stroke-width="0.6"/>
<path d="M618 434.5 Q622.5 437 627.5 434.5 L626.5 439 L628 443.5 Q622.5 441.5 617.5 443.5 L619 439 Z" fill="none" stroke="#444" stroke-width="0.8"/>
<path d="M622.7 435 L622.7 445" stroke="#555" stroke-width="0.5" stroke-dasharray="1 0.8"/>
</svg>

</body></html>
